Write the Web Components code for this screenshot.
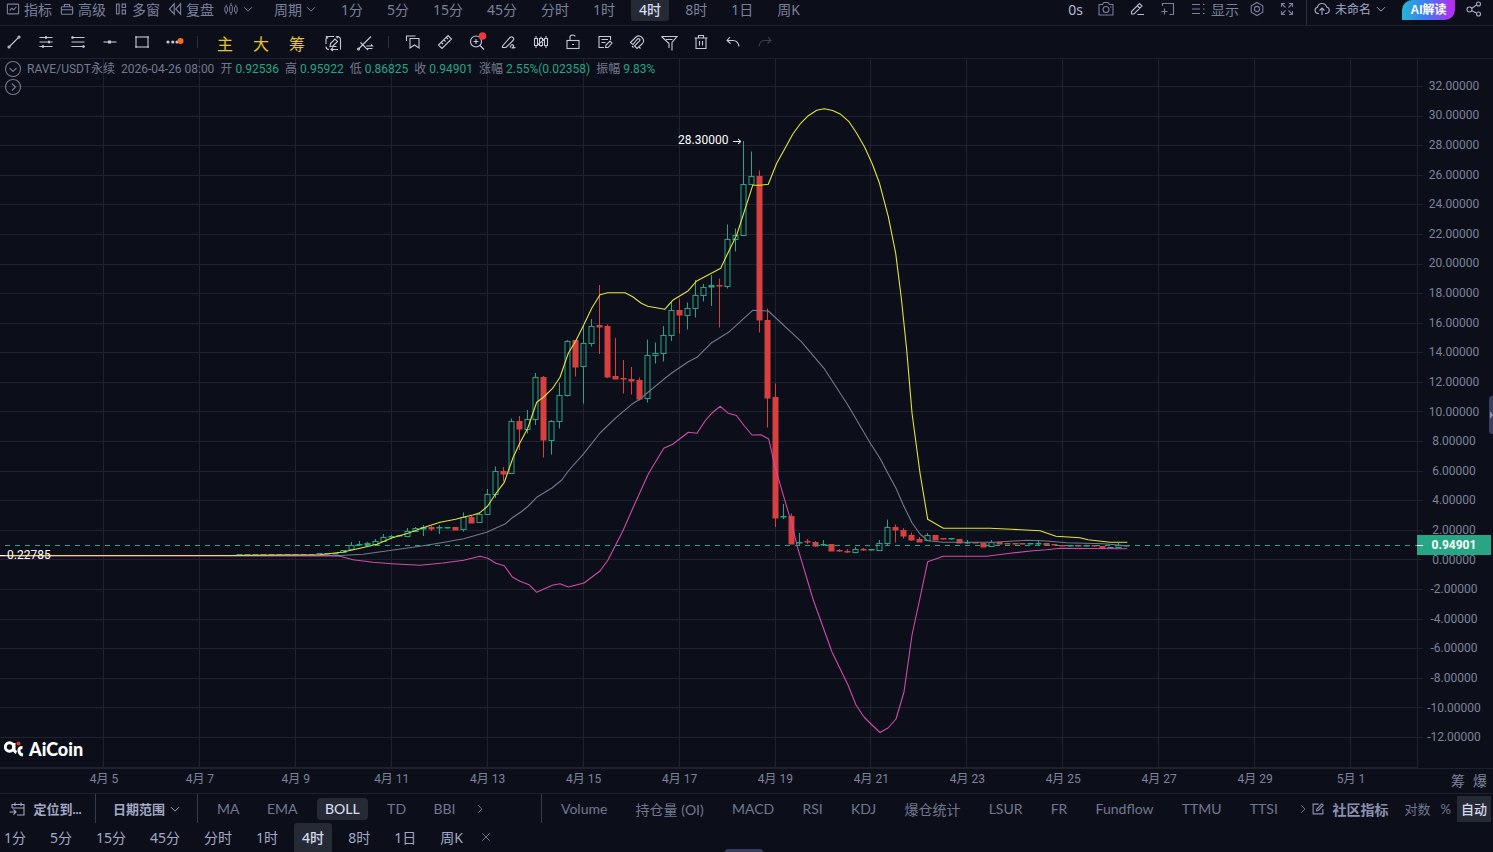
<!DOCTYPE html>
<html lang="zh-CN">
<head>
<meta charset="utf-8">
<title>AiCoin RAVE/USDT</title>
<style>
html, body { margin: 0; height: 100%; background: #0c0f1a; }
body { font-family: "Noto Sans", "Noto Sans CJK SC", sans-serif; font-size: 14px; color: #7a7f9b;
  --line: #1e222f; --active: #262a35; --bright: #d6daee; --soft: #a3a8c6; --up: #27a584; --handle: #3a3d5c; }
</style>
</head>
<body>
<ai-app></ai-app>
<script>
const define = (name, html, setup) => {
  const tpl = document.createElement('template');
  tpl.innerHTML = html;
  customElements.define(name, class extends HTMLElement {
    constructor() { super(); this.attachShadow({ mode: 'open' }).append(tpl.content.cloneNode(true)); }
    connectedCallback() { if (setup) setup(this, this.shadowRoot); }
  });
};

const ICONS = {
  chart: '<rect x="0.5" y="1.500" width="15" height="13" rx="1"/><path d="M3.500 10l3-3 2.500 2 3.500-4"/>',
  toolbox: '<rect x=".5" y="5" width="15" height="10" rx="1"/><path d="M4.500 5V2h7V5M.5 9h15"/>',
  panes: '<path d="M2 1.500h3.500v13H2zM9.500 1.500h4.500v4.500H9.500zM9.500 9.500h4.500v5H9.500z"/>',
  rewind: '<path d="M7 1L.5 8 7 15zM15.500 1L9 8l6.500 7z"/>',
  candles: '<rect x="1" y="5.500" width="3" height="6" rx="1"/><rect x="6.500" y="4" width="3" height="8" rx="1"/><rect x="12" y="5.500" width="3" height="6" rx="1"/><path d="M2.500 3v2.500M2.500 11.500V14M8 1v3M8 12v3M13.500 3v2.500M13.500 11.500V14"/>',
  down: '<path d="M1.500 5l6.500 6.500L14.500 5"/>',
  right: '<path d="M5 2l6 6-6 6"/>',
  close: '<path d="M2 2l12 12M14 2L2 14"/>',
  camera: '<path d="M1 3.500h3.500L6 1.500h4l1.500 2H15v10.500H1z"/><circle cx="8" cy="8.500" r="3"/><path d="M12 6h1.500"/>',
  pen: '<path d="M2.500 10.500L10.500 2.500l2.500 2.500-8 8H2.500zM8.500 13.500H15M8.500 5l2.500 2.500"/>',
  addpane: '<path d="M2.500 5V2.500h11v11H9.500M1.500 10.500h6M4.500 7.500v6"/>',
  list: '<path d="M1 3.500h8M1 8h8M1 12.500h8M12 3.500h1.500M12 8h1.500M12 12.500h1.500"/>',
  hex: '<path d="M8 1.500l5.800 3.200v6.600L8 14.500l-5.800-3.200V4.700z"/><circle cx="8" cy="8" r="2.600"/>',
  expand: '<path d="M2.500 6V2.500H6M2.500 2.500L6.500 6.500M10 2.500h3.500V6M13.500 2.500l-4 4M2.500 10v3.500H6M2.500 13.500l4-4M10 13.500h3.500V10M13.500 13.500l-4-4"/>',
  cloud: '<path d="M5 12.500H4A3.200 3.200 0 0 1 3.500 6.200 4.700 4.700 0 0 1 12.600 6 3.300 3.300 0 0 1 12.500 12.500H11M8 14V7.500M5.500 9.500L8 7l2.500 2.500"/>',
  share: '<circle cx="3.500" cy="8.500" r="2.500"/><circle cx="12.500" cy="3" r="2"/><circle cx="12.500" cy="13" r="2"/><path d="M5.500 7.500l5-3.500M5.800 9.700l5 2.500"/>',
  line: '<path d="M3.500 12.500l9-9"/><circle cx="3" cy="13" r="1"/><circle cx="13" cy="3" r="1"/>',
  fib: '<path d="M1.500 3.500h13M1.500 8h13M1.500 12.500h13"/><path d="M7 3.500h2M10 8h2M4 12.500h2" stroke-width="2.500"/>',
  fib2: '<path d="M1.500 3.500h13M1.500 8h13M1.500 12.500h13"/><path d="M1.500 3.500h2M12.500 12.500h2" stroke-width="2.500"/>',
  hline: '<path d="M1.500 8h13"/><path d="M6 8h3" stroke-width="3"/>',
  rect: '<rect x="2" y="3" width="12" height="10"/><path d="M1.500 3h1M13.500 3h1M1.500 13h1M13.500 13h1" stroke-width="2"/>',
  dots: '<g fill="currentColor" stroke="none"><circle cx="2" cy="8" r="1.600"/><circle cx="6.800" cy="8" r="1.600"/><circle cx="11" cy="8" r="1.600"/></g><circle cx="14.500" cy="7" r="3" fill="#fa6a22" stroke="none"/>',
  cycle: '<path d="M1 10V5.500Q1 2.500 4 2.500H9M3 4.500L1 2M12 2.500q3.500 0 3.500 3.500V13M15.500 15.500V13M13 4L11 2.500M1 12.500q0 3 3 3M6.500 15.500h6.500M8 13.500L6 15.500l2 1.500M5 12.500l.5-3L10 5l2.500 2.500L8 12zM7.500 12.500h4"/>',
  linewave: '<path d="M1.500 15L14 2.500M3.500 8.500l5.500 5.500M9.500 12h6l-1.500-1.500M15.500 14.500H9.500L11 16"/><circle cx="1.500" cy="15" r="1"/>',
  bookmark: '<path d="M1.500 7V2h9M5 4.500h9v9.500l-4.500-3-4.500 3z"/>',
  ruler: '<path d="M1.500 11L11 1.500 14.500 5 5 14.500zM4.500 8.500l1.500 1.500M7 6l1.500 1.500M9.500 3.500L11 5"/>',
  zoomin: '<circle cx="7" cy="7.500" r="5.500"/><path d="M11 11.500l4 4M4.500 7.500h5M7 5v5"/><circle cx="13.500" cy="2" r="3.800" fill="#f3353d" stroke="none"/>',
  brush: '<path d="M1.500 12L9 3.500q1.500-1.500 3 0t0 3L5 13.500H1.500zM9 13.500q1.500-4 3-2.500t-.5 2.500 3 0"/>',
  multi: '<path d="M1.500 4.500h3v7h-3zM6.500 4.500h3v7h-3zM11.500 4.500h3v7h-3zM3 2v2.500M3 11.500V14M8 2.500v2M8 11.500V13M13 2v2.500M13 11.500V14M4.500 11L11.500 5"/>',
  lock: '<rect x="2" y="6.500" width="12" height="8"/><path d="M5 6.500V3.500q0-2.500 2.500-2.500t2.500 1.500M7 10.500h2"/>',
  note: '<path d="M7 13.500H2V2.500h11.500V6M4.500 5.500h6.500M4.500 8.500h4M8.500 13.500l.5-2.500 4-4 2 2-4 4.500z"/>',
  magnet: '<path d="M1.500 8.500L7 3q3-2.500 6 .5t.5 6L8 14.500 5.500 12l5-5q1-1.200 0-2t-2 0L4 10.500zM3 12l1.500 1.500M10 13l1.500 1.500"/>',
  filter: '<path d="M.5 2.500h15.500L11 8.500V16.500M.5 2.500L8 9.500V14M5 5.500h6.500"/>',
  trash: '<path d="M1.500 4h13M3 4v10.500h10V4M5.500 4V1.500h5V4M6.500 7v4.500M9.500 7v4.500"/>',
  undo: '<path d="M5 3L2 6.500l3.500 3M2 6.500h6q5 0 6 6"/>',
  redo: '<path d="M11 3l3 3.500-3.500 3M14 6.500H8q-5 0-6 6"/>',
  calendar: '<path d="M3 7V3.500h12v10.500H8M3 7h12M6 1.500v3.500M12 1.500v3.500M.5 11h6.500M4.500 8.500L7 11l-2.500 2.500"/>',
  edit: '<path d="M9 1.500H1.500v13h13V8M6 10.500l.5-2.500L13 1l2 2L8.500 10z"/>',
  cdown: '<circle cx="8" cy="8" r="7.500"/><path d="M4.500 7L8 10.500 11.500 7"/>',
  cright: '<circle cx="8" cy="8" r="7.500"/><path d="M7 4.500l3.500 3.500L7 11.500"/>'
};
define('ai-icon', `<style>:host{display:block;flex:none;width:16px;height:16px}:host([size="14"]){width:14px;height:14px}:host([size="12"]){width:12px;height:12px}:host([size="10"]){width:10px;height:10px}
svg{display:block;width:100%;height:100%;overflow:visible;fill:none;stroke:currentColor;stroke-width:1.1}:host([size="12"]) svg,:host([size="10"]) svg{stroke-width:1.5}</style><svg viewBox="0 0 16 16" aria-hidden="true"></svg>`,
  (el, root) => { root.querySelector('svg').innerHTML = ICONS[el.getAttribute('name')]; });

const BTN = `button{all:unset;box-sizing:border-box;display:flex;align-items:center;justify-content:center;white-space:nowrap;cursor:pointer;height:100%;padding-bottom:var(--lift,0px)}`;

define('ai-button', `<style>:host{display:block;flex:none}${BTN}button{gap:5px}:host([tight]) button{gap:4px}</style><button type="button"><slot></slot></button>`,
  (el, root) => { if (el.title) root.querySelector('button').setAttribute('aria-label', el.title); });

define('ai-tab', `<style>:host{display:block;flex:none}${BTN}button{padding-left:8px;padding-right:8px}
:host([active]) button{background:var(--active);color:var(--bright);font-weight:500;border-radius:var(--tab-radius,3px)}
</style><button type="button"><slot></slot></button>`);

define('ai-rule', `<style>:host{display:block;flex:none;width:1px;background:var(--rule,#2c3040)}</style>`);

define('ai-topbar', `<style>
:host{display:flex;justify-content:space-between;height:25px;border-bottom:1px solid var(--line);--lift:3px}
.group{display:flex;height:21px;align-items:stretch}
.menus{gap:9px;padding-left:7px}
.cycle{gap:21px;padding-left:10px}
.tabs{gap:8px;padding-left:17px;--tab-radius:0 0 3px 3px}
.tools{gap:15px}.view{gap:14px;padding:0 11px 0 10px}
.right{display:flex}
ai-rule{height:25px}
.save{padding-left:7px;font-size:12px;color:var(--soft)}
.ai{padding-left:16px}
.ai button{all:unset;box-sizing:border-box;width:53px;height:20px;text-align:center;font:700 12px/21px "Liberation Sans","Noto Sans CJK SC",sans-serif;color:#fff;white-space:nowrap;
 border-radius:10px 0 10px 0;background:linear-gradient(90deg,#26b5d0,#3c7cf6 45%,#c026f0)}
.share{padding:0 11px;color:var(--soft)}
.strong{color:#b4b9d2}
</style>
<div class="right">
<div class="group menus">
<ai-button><ai-icon name="chart" size="12"></ai-icon>指标</ai-button>
<ai-button><ai-icon name="toolbox" size="12"></ai-icon>高级</ai-button>
<ai-button><ai-icon name="panes" size="12"></ai-icon>多窗</ai-button>
<ai-button><ai-icon name="rewind" size="12"></ai-icon>复盘</ai-button></div>
<div class="group cycle">
<ai-button title="K线类型"><ai-icon name="candles" size="14"></ai-icon><ai-icon name="down" size="10"></ai-icon></ai-button>
<ai-button tight>周期<ai-icon name="down" size="10"></ai-icon></ai-button></div>
<div class="group tabs"><ai-tab>1分</ai-tab><ai-tab>5分</ai-tab><ai-tab>15分</ai-tab><ai-tab>45分</ai-tab><ai-tab>分时</ai-tab><ai-tab>1时</ai-tab><ai-tab active>4时</ai-tab><ai-tab>8时</ai-tab><ai-tab>1日</ai-tab><ai-tab>周K</ai-tab></div>
</div>
<div class="right">
<div class="group tools">
<ai-button class="strong">0s</ai-button>
<ai-button title="截图"><ai-icon name="camera"></ai-icon></ai-button>
<ai-button title="画线" class="strong"><ai-icon name="pen"></ai-icon></ai-button>
<ai-button title="添加"><ai-icon name="addpane"></ai-icon></ai-button>
<ai-button tight><ai-icon name="list"></ai-icon>显示</ai-button></div>
<div class="group view">
<ai-button title="设置"><ai-icon name="hex"></ai-icon></ai-button>
<ai-button title="全屏"><ai-icon name="expand"></ai-icon></ai-button></div>
<ai-rule></ai-rule>
<div class="group save"><ai-button><ai-icon name="cloud"></ai-icon>未命名<ai-icon name="down" size="10"></ai-icon></ai-button></div>
<div class="group ai"><button type="button">AI解读</button></div>
<div class="group share"><ai-button title="分享"><ai-icon name="share"></ai-icon></ai-button></div>
</div>`);

define('ai-drawbar', `<style>
:host{display:flex;align-items:center;height:32px;padding-left:6px;border-bottom:1px solid var(--line);color:#c5c9d6}
.g{display:flex;gap:16px}.y{display:flex;gap:20px;padding:3px 20px 0 19px;color:#e5c52a;font-size:16px;line-height:20px}
ai-rule{height:12px;margin:0 0 0 15px}.t{padding-left:16px}
.off{color:#3b4051}
</style><div class="g a"></div><ai-rule></ai-rule>
<div class="y"><ai-button>主</ai-button><ai-button>大</ai-button><ai-button>筹</ai-button></div>
<div class="g b"></div><ai-rule></ai-rule><div class="g t c"></div>`,
  (el, root) => {
    const fill = (cls, names) => root.querySelector(cls).innerHTML = names.map(([n, t]) =>
      `<ai-button title="${t}"${n === 'redo' ? ' class="off"' : ''}><ai-icon name="${n}"></ai-icon></ai-button>`).join('');
    fill('.a', [['line', '线段'], ['fib', '斐波那契'], ['fib2', '平行线'], ['hline', '水平线'], ['rect', '矩形'], ['dots', '更多']]);
    fill('.b', [['cycle', '循环'], ['linewave', '趋势']]);
    fill('.c', [['bookmark', '收藏'], ['ruler', '测量'], ['zoomin', '放大'], ['brush', '画笔'], ['multi', '形态'], ['lock', '锁定'], ['note', '备注'], ['magnet', '磁吸'], ['filter', '筛选'], ['trash', '删除'], ['undo', '撤销'], ['redo', '重做']]);
  });

/* Candles on an 8px step: [direction, body top, body bottom, high, low]; drawing space starts 59 units down. */
const CANDLES = `G554,555 G554,555 G554,555 G554,555 G554,555 G554,555 G554,555 G554,555 G554,555 G554,555 G553,554 G553,554 G553,554
G550.5,552.5 G545.5,549.5,542,550 G544.5,545.5,541,546 G543.5,545,542,546 G541.5,544,539,544 G537.5,541.5,534,542 G536.5,537.5,535,539 G535.5,536.5
G531.5,536.5,528,537 G528.5,531,527,531 G527,528.5,525,536 R527,528.5,526,531 G527.5,528.5,525,534 G527.5,528.5 R527,529.5 G517.5,529.5,512.5,531.5 R517,522.5,516,523 G514.5,522.5,512,523
G494.5,514.5,489,515 G471.5,494.5,466.5,498 R471,473.5,467,481.5 G421.5,473.5,418.5,474 R421.5,429.5,416,450 G419.5,429.5,410,433.5 G377.5,419.5,373,425 R377.5,440.5,376,457.5 G421.5,440.5,420,454.5 G395.5,421.5,382.5,428.5
G341.5,395.5,340,396.5 R340,366.5,340,376.5 G343.5,366.5,325,403.5 G326.5,343.5,319,346.5 R325,326.5,285,354 R326,376.5,324.5,378 R376,378.5,338,379 R378.5,379.5,360,393.5 R379,380.5,367,394.5 R380,398.5,377.5,400.5
G355.5,398.5,339.5,402.5 G353.5,355.5,342.5,363.5 G335.5,353.5,326,361.5 G310.5,335.5,302,341 R310.5,315.5,298.5,333.5 G308.5,315.5,302.5,329.5 G295.5,308.5,280,317.5 G287.5,295.5,284,301.5 G285.5,287,275,306 R285.5,286.5,278.5,327.5
G239.5,286.5,224.5,288.5 G235.5,239.5,228.5,251.5 G184.5,235.5,141,236 G176.5,184.5,151.5,185 R176.5,320.5,170.5,332.5 R320,398,308.5,427.5 R397,518,383.5,527 G516.5,517.5,504,519 R516,544,513.5,544 G542.5,543.5,533,545 R541.5,542.5,539,544
R542,546,541,547 G544.5,545.5,540,546 R544,550.5,544,551 R550,551,549,552 R551.5,552.5,549,553 G549.5,552.5,547,553 R549.5,550.5,548,551 G549.5,550.5 G543.5,550.5,540,551 G527.5,543.5,519.5,545.5 R527.5,530.5,524.5,542.5
R530,536,528,538.5 R535,540,532.5,541 R539,541.5,537,542 G535.5,540.5,533,541 R535.5,540 R538.5,539.5 G538.5,539.5 R539,542.5 G542,543,540,544 R542,543 R543,546.5 G542.5,546.5,540,547 R542,543.5 R543,544 R543.5,544.5 R543.5,544.5 G543.5,544.5
G543,544,540,545 R543.5,545 R544.5,545.5 R545,546 G545.5,546.5 R545.5,546.5 G545.5,546.5 R545.5,546.5 R546,548 G547,548 G545.5,547.5,543,548 G545.5,546.5`.split(/\s+/);
const YELLOW = '0,555.5 230,555.5 320,554.7 343,552 360,548.3 377,544.3 391.7,538 408,533.3 423,527.7 440,522.3 455.7,519.3 464,517 473,515 480,512.7 487.7,506 496,493.3 504.3,482.3 513,457.7 519.7,443.3 527.7,428.3 536.7,402.3 543.7,397 552.3,388.7 560,377.3 568.3,353.3 575.7,341 583.7,325 591.7,308.3 600,294.7 607.7,292.7 625,292.7 632.7,296.7 641.3,303.3 647.7,306.3 664.7,309.3 672.7,300.3 679.7,296 688.3,290.7 696.3,281.3 720.7,268.3 727.3,254.3 736.7,235 752.7,185.3 760,185.3 768.3,184.3 776.7,163.3 783.7,150.7 792.7,134.3 800.7,123.3 808.3,115.7 816.7,110.3 824.3,108.7 832.7,110.5 840.7,114.3 848.7,121.3 856.7,133.3 864.7,147.3 872.3,164 879.3,182.7 888.3,216.7 895.7,253.3 901.3,298 906.7,350 912,413 920,473 927.7,519.3 943.3,528.3 990,528.3 1011.7,529.3 1040,530.7 1056,536.3 1080,537.7 1088,539.7 1110,542.3 1127.3,542.3';
const GRAY = '0,555.7 340,555.5 363,554.3 391.7,550.3 420,546.3 440,543 463.7,538.7 486.7,532.3 496,528 505,524 512.3,517.7 521.3,511.7 528.3,506 536.7,497.3 552.3,487.7 561.7,480 568.3,471 583.7,453.7 600,433 616,417.7 631.7,404.3 639.7,399.3 648.3,392 663.7,379.3 671.7,373 688.3,361.7 697,357.3 711.7,342.7 729.3,331.7 752.7,310.3 768.3,311 801.3,341.7 824,368.3 848.3,405.7 870.3,443.3 880,458.3 887.3,472.3 896,488.3 903.3,505 912,522.7 920,534 927.7,540.7 943.3,542.3 993,542.3 1026.7,540.3 1046.7,541 1066.7,542.7 1103,543.7 1127.3,545.7';
const PINK = '0,556 325,555.8 340,556.3 353,559.7 373,562.3 391.7,563.7 420,565.3 443,563 463.7,560.3 480,556.3 487.7,558.3 496,563.3 504.3,565.7 512.3,577 520,581.3 529,584.7 536.7,592.3 552.3,585.3 560,583.7 568.3,587 584,583 600,571 608,560 623.3,530 631.7,510.7 648.3,474 663.7,448.3 672.7,444.3 688.3,432.3 697,433.3 705,421 712.3,412.7 720.3,406.3 728.3,413.3 736.5,415.5 744,425.500 752,435 760.7,434.7 768.7,439 775,466.7 783.7,496.7 791.7,523.3 797.3,546.7 813.3,600 832,652 848,685 856,705 864,717 872,725 880,732.5 888,728 896,719 904,692 912,635 920,598 927.7,561.7 943.3,556.3 986.7,556.3 1010,553.3 1033,550.7 1046.7,549.7 1060,548.3 1127.3,548.7';

define('ai-plot', `<style>:host{display:block;position:relative;min-width:0;border-right:1px solid var(--line);border-bottom:1px solid var(--line)}
svg{position:absolute;inset:0;width:100%;height:100%;display:block;overflow:visible}
text{font:12px Roboto,sans-serif;fill:#fff}
::slotted(.legend){position:absolute;top:2px;left:5px}
::slotted(.logo){position:absolute;left:4px;bottom:8px}
</style><svg viewBox="0 59 1417 708" preserveAspectRatio="none" role="img" aria-label="RAVE/USDT 4时 BOLL"></svg><slot></slot>`,
  (el, root) => {
    let s = '<g stroke="#1f2330">';
    for (let i = 0; i < 23; i++) { const y = Math.round(86 + i * 29.59) + .5; s += `<path d="M0 ${y}H1423"/>`; }
    for (let i = 0; i < 14; i++) { const x = Math.round(103 + i * 95.93) + .5; s += `<path d="M${x} 59V767"/>`; }
    s += '</g><path d="M0 555.500H320" stroke="#d8433f"/>';
    const first = -31;
    CANDLES.forEach((c, i) => {
      const up = c[0] === 'G', v = c.slice(1).split(',').map(Number), col = up ? '#27a584' : '#d8403f';
      const x = Math.floor(487 + (i + first) * 7.994 + .4) + .5, [t, b] = v;
      const hi = v[2] ?? t, lo = v[3] ?? b, hollow = up && b - t > 1.9;
      s += hollow
        ? `<path d="M${x} ${hi}V${t}M${x} ${b}V${lo}" stroke="${col}"/><rect x="${x - 2.5}" y="${Math.floor(t) + .5}" width="5" height="${Math.max(2, Math.round(b - t))}" fill="none" stroke="${col}"/>`
        : `<path d="M${x} ${hi}V${lo}" stroke="${col}"/><rect x="${x - 3}" y="${Math.floor(t)}" width="6" height="${Math.max(1.5, Math.round(b - t) + .5)}" fill="${col}"/>`;
    });
    const line = (p, c) => `<polyline points="${p}" fill="none" stroke="${c}" stroke-width="1.1" stroke-linejoin="round"/>`;
    s += line(GRAY, '#74788c') + line(PINK, '#cf4ba8') + line(YELLOW, '#e3e23c');
    s += '<path d="M5 545.500H1417" stroke="#27a584" stroke-dasharray="5 5"/>';
    s += '<text x="678" y="144">28.30000</text><path d="M733 141.500h7M738 139l3 2.500-3 2.500" stroke="#fff" fill="none"/>';
    s += '<path d="M0 555.500h5" stroke="#fff"/><text x="7" y="559">0.22785</text>';
    root.querySelector('svg').innerHTML = s;
  });

define('ai-legend', `<style>:host{display:flex;flex-direction:column;gap:2px;color:#747990;font:12px/16px Roboto,"Noto Sans CJK SC",sans-serif}
.row{display:flex;gap:6px;align-items:center}
dl{display:flex;margin:0;gap:6px}dl div{display:flex;gap:3px}dd{margin:0;color:var(--up)}
span{white-space:nowrap}</style>
<div class="row"><ai-button title="收起"><ai-icon name="cdown"></ai-icon></ai-button><span>RAVE/USDT永续</span><span>2026-04-26 08:00</span>
<dl><div><dt>开</dt><dd>0.92536</dd></div><div><dt>高</dt><dd>0.95922</dd></div><div><dt>低</dt><dd>0.86825</dd></div><div><dt>收</dt><dd>0.94901</dd></div><div><dt>涨幅</dt><dd>2.55%(0.02358)</dd></div><div><dt>振幅</dt><dd>9.83%</dd></div></dl></div>
<div class="row"><ai-button title="展开"><ai-icon name="cright"></ai-icon></ai-button></div>`);

define('ai-logo', `<style>:host{display:flex;align-items:center;gap:5px;color:#fff;font:900 18px/20px Lato,sans-serif}svg{display:block}</style>
<svg width="20" height="16" viewBox="0 0 20 16" fill="none" stroke="#fff" stroke-width="3"><circle cx="5.500" cy="6" r="4.200"/><path d="M10 2v6q0 2.500 2.500 3.500M18.500 6.500q-4 0-3.500 3.500.5 3.500 4 4"/><circle cx="14.500" cy="2.500" r="2" fill="#e5322d" stroke="none"/></svg><span>AiCoin</span>`);

define('ai-prices', `<style>:host{display:block;position:relative;font:12px/16px Roboto,sans-serif;color:#7d829a}
ol{list-style:none;box-sizing:border-box;margin:0;height:100%;padding:12px 3px 16px 0;display:flex;flex-direction:column;text-align:center}
li{flex:1;display:flex;align-items:center;justify-content:center}
.tag{position:absolute;left:-1px;right:2px;top:calc(68.6% - 10px);height:20px;line-height:20px;text-align:center;background:#27a584;color:#fff;font-weight:700}
.tag::before{content:"";position:absolute;left:0;top:10px;width:6px;height:1px;background:#fff}
.handle{position:absolute;right:0;top:47.6%;width:4px;height:38px;border-radius:3px 0 0 3px;background:var(--handle)}
.handle svg{display:block;margin:15px 0 0 1px}
</style><ol></ol><div class="tag">0.94901</div><div class="handle"><svg width="3" height="8" viewBox="0 0 3 8" fill="#8f94b5"><path d="M0 0l3 4-3 4z"/></svg></div>`,
  (el, root) => {
    for (let p = 32; p >= -12; p -= 2) { const li = document.createElement('li'); li.textContent = p.toFixed(5); root.querySelector('ol').append(li); }
  });

define('ai-dates', `<style>:host{display:flex;box-sizing:border-box;height:26px;border-top:1px solid var(--line);border-bottom:1px solid var(--line);font:12px/21px Roboto,"Noto Sans CJK SC",sans-serif;color:#7d829a}
ol{list-style:none;flex:1;margin:0;padding:0 18px 0 56px;display:grid;grid-template-columns:repeat(14,1fr);text-align:center}
.side{box-sizing:border-box;width:76px;display:flex;justify-content:flex-end;gap:8px;padding:1px 6px 0 0;font-size:14px}
</style><ol></ol><div class="side"><ai-button>筹</ai-button><ai-button>爆</ai-button></div>`,
  (el, root) => {
    '4月 5,4月 7,4月 9,4月 11,4月 13,4月 15,4月 17,4月 19,4月 21,4月 23,4月 25,4月 27,4月 29,5月 1'.split(',')
      .forEach(d => { const li = document.createElement('li'); li.textContent = d; root.querySelector('ol').append(li); });
  });

define('ai-indicators', `<style>:host{display:flex;align-items:center;height:29px;font-family:Lato,"Noto Sans CJK SC",sans-serif;color:#72778f;--rule:#363b4c}
ai-rule{align-self:stretch}
.nav{box-sizing:border-box;display:flex;justify-content:center;align-items:center;font-weight:700;font-size:13px;color:var(--soft)}
.go{width:95px;padding-right:4px}.go ai-button{font-size:13px}.range{width:101px}
.list{display:flex;height:22px;justify-content:space-between;align-items:center;box-sizing:border-box}
.list ai-tab{height:22px;--tab-radius:4px}
.main{width:343px;padding:0 56px 0 11px}
.sub{flex:1;min-width:0;padding:0 4px 0 11px}
.tail{display:flex;align-items:center;gap:6px;padding-right:2px}
.comm{font-weight:700;color:#8b90b0;padding-right:10px}
.scale{display:flex;gap:10px;align-items:center;font-size:13px}
.auto{box-sizing:border-box;width:34px;height:26px;margin-left:-4px;background:var(--active);color:var(--bright);display:flex;justify-content:center;font-weight:500}
</style>
<div class="nav go"><ai-button><ai-icon name="calendar"></ai-icon>&nbsp;定位到...</ai-button></div><ai-rule></ai-rule>
<div class="nav range"><ai-button>日期范围<ai-icon name="down" size="10"></ai-icon></ai-button></div><ai-rule></ai-rule>
<div class="list main"><ai-tab>MA</ai-tab><ai-tab>EMA</ai-tab><ai-tab active>BOLL</ai-tab><ai-tab>TD</ai-tab><ai-tab>BBI</ai-tab><ai-button title="更多主图指标"><ai-icon name="right" size="10"></ai-icon></ai-button></div><ai-rule></ai-rule>
<div class="list sub"><ai-tab>Volume</ai-tab><ai-tab>持仓量 (OI)</ai-tab><ai-tab>MACD</ai-tab><ai-tab>RSI</ai-tab><ai-tab>KDJ</ai-tab><ai-tab>爆仓统计</ai-tab><ai-tab>LSUR</ai-tab><ai-tab>FR</ai-tab><ai-tab>Fundflow</ai-tab><ai-tab>TTMU</ai-tab><ai-tab>TTSI</ai-tab><ai-button title="更多副图指标"><ai-icon name="right" size="10"></ai-icon></ai-button></div>
<div class="tail"><ai-button class="comm"><ai-icon name="edit" size="12"></ai-icon>&nbsp;社区指标</ai-button>
<div class="scale"><ai-button>对数</ai-button><ai-button>%</ai-button><div class="auto"><ai-button>自动</ai-button></div></div></div>`);

define('ai-periods', `<style>:host{display:flex;position:relative;height:29px;color:var(--soft);--lift:2px}
nav{display:flex;gap:8px;margin-left:-4px;--tab-radius:3px 3px 0 0}nav ai-button{padding-left:2px;color:#747990}
.handle{position:absolute;bottom:0;left:50%;width:38px;height:3px;margin-left:-22px;border-radius:3px 3px 0 0;background:var(--handle)}
</style><nav><ai-tab>1分</ai-tab><ai-tab>5分</ai-tab><ai-tab>15分</ai-tab><ai-tab>45分</ai-tab><ai-tab>分时</ai-tab><ai-tab>1时</ai-tab><ai-tab active>4时</ai-tab><ai-tab>8时</ai-tab><ai-tab>1日</ai-tab><ai-tab>周K</ai-tab><ai-button title="关闭"><ai-icon name="close" size="10"></ai-icon></ai-button></nav><div class="handle"></div>`);

define('ai-app', `<style>:host{display:flex;flex-direction:column;height:100vh;overflow:hidden}
main{flex:1;min-height:0;display:grid;grid-template-columns:1fr 75px}</style>
<ai-topbar></ai-topbar><ai-drawbar></ai-drawbar>
<main><ai-plot><ai-legend class="legend"></ai-legend><ai-logo class="logo"></ai-logo></ai-plot><ai-prices></ai-prices></main>
<ai-dates></ai-dates><ai-indicators></ai-indicators><ai-periods></ai-periods>`);
</script>
</body>
</html>
